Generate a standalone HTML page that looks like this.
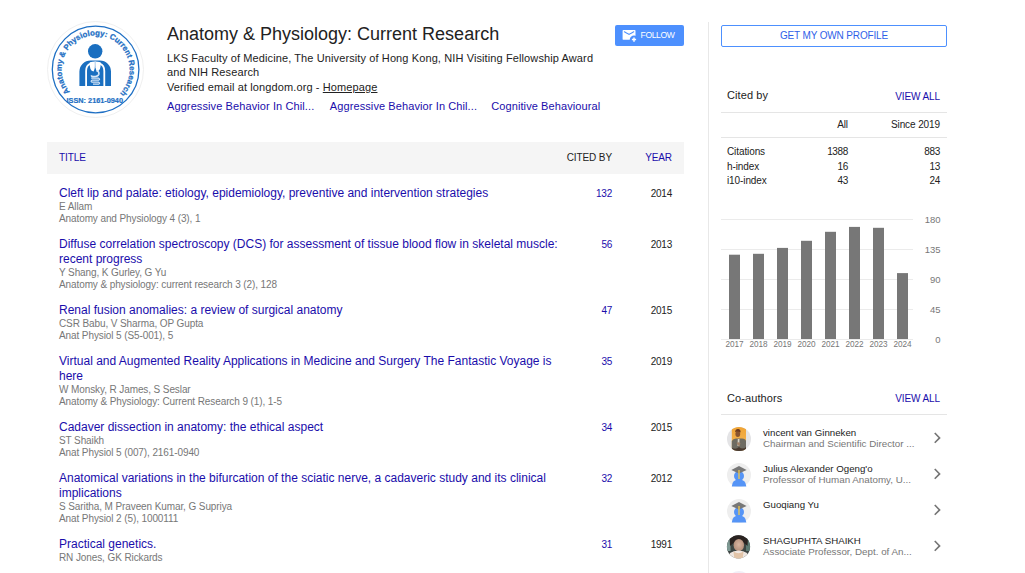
<!DOCTYPE html>
<html><head><meta charset="utf-8">
<style>
*{margin:0;padding:0;box-sizing:border-box}
html,body{width:1025px;height:573px;overflow:hidden;background:#fff}
body{font-family:"Liberation Sans",sans-serif;color:#222;position:relative}
.a{position:absolute;white-space:nowrap}
.lnk{color:#1a0dab}
.g{color:#777}
#hdrname{left:167px;top:24px;font-size:18px;line-height:20px;color:#222}
#ver{left:167px;top:79.5px;font-size:11px;line-height:14px;color:#222;letter-spacing:0.11px}
#aff{left:167px;top:50.5px;font-size:11px;line-height:14px;color:#222;letter-spacing:0.11px}
#aff u{text-decoration:underline}
.int{top:98.5px;font-size:11px;line-height:14px;letter-spacing:0.1px}
#follow{left:615px;top:25px;width:69px;height:21px;background:#4d90fe;border-radius:2px}
#follow span{position:absolute;left:25.6px;top:5px;font-size:8.6px;line-height:10px;color:#fff;letter-spacing:-0.4px}
#thead{left:47px;top:142px;width:637px;height:32px;background:#f5f5f5}
.th{font-size:10px;line-height:12px;top:152px;letter-spacing:-0.1px}
.row{position:absolute;left:59px;width:502px}
.t{font-size:12px;line-height:15px;color:#1a0dab;white-space:normal}
.s{font-size:10px;line-height:12px;color:#777;letter-spacing:-0.1px;white-space:nowrap}
.num{letter-spacing:-0.25px;font-size:10px;line-height:12px;text-align:right}
#vline{left:708px;top:22px;width:1px;height:560px;background:#e8e8e8}
#gmop{left:721px;top:25px;width:226px;height:22px;border:1px solid #4d90fe;border-radius:2px;text-align:center;font-size:10px;line-height:20px;color:#2f5fe8;letter-spacing:-0.15px}
.hr{position:absolute;left:721px;width:226px;height:1px;background:#e5e5e5}
.c10{font-size:10px;line-height:12px;letter-spacing:-0.1px}
.nm{letter-spacing:-0.35px}
</style></head><body>

<!-- logo -->
<svg class="a" style="left:45px;top:20px" width="100" height="100" viewBox="45 20 100 100">
  <circle cx="95.5" cy="69.5" r="48" fill="#fff" stroke="#f0f0f0" stroke-width="1"/>
  <circle cx="95.6" cy="69.5" r="43.3" fill="none" stroke="#1e6fc4" stroke-width="1.3"/>
  <defs><path id="arc" d="M69.94,91.81 A34,34 0 1 1 121.26,91.81"/></defs>
  <text font-family="Liberation Sans" font-weight="bold" font-size="7.9" fill="#1e6fc4" stroke="#1e6fc4" stroke-width="0.25"><textPath href="#arc" startOffset="0">Anatomy &amp; Physiology: Current Research</textPath></text>
  <text x="94.8" y="103" text-anchor="middle" font-family="Liberation Sans" font-weight="bold" font-size="7.3" fill="#1e6fc4" stroke="#1e6fc4" stroke-width="0.2">ISSN: 2161-0940</text>
  <circle cx="95.2" cy="51.3" r="7.2" fill="#1a6fc0"/>
  <path d="M79.4,86 V71.6 A11.2,11.2 0 0 1 90.6,60.4 H99.8 A11.2,11.2 0 0 1 111,71.6 V86 Z" fill="#1a6fc0"/>
  <path d="M86.1,86 V71 Q86.1,65.2 90.5,63.6 M104.3,86 V71 Q104.3,65.2 99.9,63.6" fill="none" stroke="#fff" stroke-width="1.8"/>
  <path d="M89.8,62.2 Q89.2,71 93.6,71.4 Q94.9,69 95.2,65 Q95.5,69 96.8,71.4 Q101.2,71 100.6,62.2 Q95.2,60.8 89.8,62.2 Z" fill="#fff"/>
  <path d="M95.2,61.5 V68" stroke="#b9d3ee" stroke-width="1.2"/>
  <path d="M96.6,70.8 Q99.3,71.2 98.8,74.2 Q98.2,76.6 93.6,76.6 Q91.2,76.6 91.6,75.2" fill="none" stroke="#d6e6f6" stroke-width="1.7"/>
  <path d="M91.2,78.2 H98.6 Q100.6,79.2 98.6,80.2 H92 Q90.2,81.2 92,82.2 H98.6 Q100.6,83.2 98.6,84.2 H93" fill="none" stroke="#d6e6f6" stroke-width="1.2"/>
</svg>

<div id="hdrname" class="a">Anatomy &amp; Physiology: Current Research</div>
<div id="aff" class="a">LKS Faculty of Medicine, The University of Hong Kong, NIH Visiting Fellowship Award<br>and NIH Research</div>
<div id="ver" class="a">Verified email at longdom.org - <u>Homepage</u></div>
<div class="a int lnk" style="left:167px">Aggressive Behavior In Chil...</div>
<div class="a int lnk" style="left:329.8px">Aggressive Behavior In Chil...</div>
<div class="a int lnk" style="left:491.2px">Cognitive Behavioural</div>

<div id="follow" class="a">
  <svg style="position:absolute;left:0;top:0" width="69" height="21" viewBox="615 25 69 21">
    <rect x="622.6" y="29.9" width="12.9" height="9.9" rx="0.9" fill="#fff"/>
    <path d="M624.4,31.8 Q629,34.5 629.05,34.5 Q629.1,34.5 633.7,31.8" fill="none" stroke="#4d90fe" stroke-width="1.1" stroke-linecap="round"/>
    <circle cx="634" cy="39.6" r="4.2" fill="#4d90fe"/>
    <path d="M631.9,39.6 H636.1 M634,37.4 V41.8" stroke="#fff" stroke-width="1.5"/>
  </svg>
  <span>FOLLOW</span>
</div>

<!-- table header -->
<div id="thead" class="a"></div>
<div class="a th lnk" style="left:59px">TITLE</div>
<div class="a th" style="left:540px;width:72px;text-align:right">CITED BY</div>
<div class="a th lnk" style="left:620px;width:52px;text-align:right">YEAR</div>

<!-- rows -->
<div class="row" style="top:186px"><div class="t">Cleft lip and palate: etiology, epidemiology, preventive and intervention strategies</div><div class="s">E Allam</div><div class="s">Anatomy and Physiology 4 (3), 1</div></div>
<div class="row" style="top:237px"><div class="t">Diffuse correlation spectroscopy (DCS) for assessment of tissue blood flow in skeletal muscle: recent progress</div><div class="s">Y Shang, K Gurley, G Yu</div><div class="s">Anatomy &amp; physiology: current research 3 (2), 128</div></div>
<div class="row" style="top:303px"><div class="t">Renal fusion anomalies: a review of surgical anatomy</div><div class="s">CSR Babu, V Sharma, OP Gupta</div><div class="s">Anat Physiol 5 (S5-001), 5</div></div>
<div class="row" style="top:354px"><div class="t">Virtual and Augmented Reality Applications in Medicine and Surgery The Fantastic Voyage is here</div><div class="s">W Monsky, R James, S Seslar</div><div class="s">Anatomy &amp; Physiology: Current Research 9 (1), 1-5</div></div>
<div class="row" style="top:420px"><div class="t">Cadaver dissection in anatomy: the ethical aspect</div><div class="s">ST Shaikh</div><div class="s">Anat Physiol 5 (007), 2161-0940</div></div>
<div class="row" style="top:471px"><div class="t">Anatomical variations in the bifurcation of the sciatic nerve, a cadaveric study and its clinical implications</div><div class="s">S Saritha, M Praveen Kumar, G Supriya</div><div class="s">Anat Physiol 2 (5), 1000111</div></div>
<div class="row" style="top:537px"><div class="t">Practical genetics.</div><div class="s">RN Jones, GK Rickards</div></div>

<!-- numbers -->
<div class="a num lnk" style="left:570px;width:42px;top:187.5px">132</div>
<div class="a num" style="left:630px;width:42px;top:187.5px">2014</div>
<div class="a num lnk" style="left:570px;width:42px;top:238.5px">56</div>
<div class="a num" style="left:630px;width:42px;top:238.5px">2013</div>
<div class="a num lnk" style="left:570px;width:42px;top:304.5px">47</div>
<div class="a num" style="left:630px;width:42px;top:304.5px">2015</div>
<div class="a num lnk" style="left:570px;width:42px;top:355.5px">35</div>
<div class="a num" style="left:630px;width:42px;top:355.5px">2019</div>
<div class="a num lnk" style="left:570px;width:42px;top:421.5px">34</div>
<div class="a num" style="left:630px;width:42px;top:421.5px">2015</div>
<div class="a num lnk" style="left:570px;width:42px;top:472.5px">32</div>
<div class="a num" style="left:630px;width:42px;top:472.5px">2012</div>
<div class="a num lnk" style="left:570px;width:42px;top:538.5px">31</div>
<div class="a num" style="left:630px;width:42px;top:538.5px">1991</div>

<!-- right column -->
<div id="vline" class="a"></div>
<div id="gmop" class="a">GET MY OWN PROFILE</div>

<div class="a" style="left:727px;top:88px;font-size:11px;line-height:14px;letter-spacing:0.1px">Cited by</div>
<div class="a lnk" style="left:880px;width:60px;text-align:right;top:90.5px;font-size:10px;line-height:12px;letter-spacing:-0.1px">VIEW ALL</div>
<div class="hr" style="top:112px"></div>
<div class="a c10" style="left:800px;width:48px;text-align:right;top:118.7px">All</div>
<div class="a c10" style="left:870px;width:70px;text-align:right;top:118.7px">Since 2019</div>
<div class="hr" style="top:137px"></div>
<div class="a c10" style="left:727px;top:146px">Citations</div>
<div class="a c10 nm" style="left:800px;width:48px;text-align:right;top:146px" >1388</div>
<div class="a c10 nm" style="left:870px;width:70px;text-align:right;top:146px" >883</div>
<div class="a c10" style="left:727px;top:160.5px">h-index</div>
<div class="a c10 nm" style="left:800px;width:48px;text-align:right;top:160.5px">16</div>
<div class="a c10 nm" style="left:870px;width:70px;text-align:right;top:160.5px">13</div>
<div class="a c10" style="left:727px;top:175.4px">i10-index</div>
<div class="a c10 nm" style="left:800px;width:48px;text-align:right;top:175.4px">43</div>
<div class="a c10 nm" style="left:870px;width:70px;text-align:right;top:175.4px">24</div>

<!-- chart -->
<svg class="a" style="left:715px;top:205px" width="240" height="150" viewBox="715 205 240 150">
  <g stroke="#ebebeb" stroke-width="1">
    <line x1="721" x2="913" y1="219.5" y2="219.5"/>
    <line x1="721" x2="913" y1="249.5" y2="249.5"/>
    <line x1="721" x2="913" y1="279.5" y2="279.5"/>
    <line x1="721" x2="913" y1="309.5" y2="309.5"/>
    <line x1="721" x2="913" y1="339.5" y2="339.5"/>
  </g>
  <g fill="#777">
    <rect x="729" y="254.7" width="11" height="84.3"/>
    <rect x="753" y="253.8" width="11" height="85.2"/>
    <rect x="777" y="247.9" width="11" height="91.1"/>
    <rect x="801" y="240.8" width="11" height="98.2"/>
    <rect x="825" y="231.8" width="11" height="107.2"/>
    <rect x="849" y="226.9" width="11" height="112.1"/>
    <rect x="873" y="227.8" width="11" height="111.2"/>
    <rect x="897" y="273.1" width="11" height="65.9"/>
  </g>
  <g fill="#777" font-family="Liberation Sans" font-size="8.2" text-anchor="middle">
    <text x="734.5" y="346.5">2017</text>
    <text x="758.5" y="346.5">2018</text>
    <text x="782.5" y="346.5">2019</text>
    <text x="806.5" y="346.5">2020</text>
    <text x="830.5" y="346.5">2021</text>
    <text x="854.5" y="346.5">2022</text>
    <text x="878.5" y="346.5">2023</text>
    <text x="902.5" y="346.5">2024</text>
  </g>
  <g fill="#777" font-family="Liberation Sans" font-size="9.5" text-anchor="end">
    <text x="940.5" y="223">180</text>
    <text x="940.5" y="253">135</text>
    <text x="940.5" y="283">90</text>
    <text x="940.5" y="313">45</text>
    <text x="940.5" y="343">0</text>
  </g>
</svg>

<!-- co-authors -->
<div class="a" style="left:727px;top:390.6px;font-size:11px;line-height:14px;letter-spacing:0.1px">Co-authors</div>
<div class="a lnk" style="left:880px;width:60px;text-align:right;top:393px;font-size:10px;line-height:12px;letter-spacing:-0.1px">VIEW ALL</div>
<div class="hr" style="top:414px"></div>

<svg class="a" style="left:715px;top:420px" width="240" height="153" viewBox="715 420 240 153">
  <defs>
    <clipPath id="cc1"><circle cx="739" cy="439" r="12"/></clipPath>
    <clipPath id="cc4"><circle cx="738.5" cy="546.8" r="11.6"/></clipPath>
    <g id="schol">
      <circle cx="739" cy="0" r="12" fill="#eee"/>
      <circle cx="739" cy="1" r="5" fill="#5594f6"/>
      <path d="M731.8,11.5 Q732,4.5 739,4.5 Q746,4.5 746.3,11.5 Z" fill="#5594f6"/>
      <path d="M731.3,-5 L739,-9 L746.6,-5 L739,-1.5 Z" fill="#777"/>
      <path d="M739,-5 V4" stroke="#f1c84a" stroke-width="1.3"/>
    </g>
  </defs>
  <!-- avatar 1 photo -->
  <circle cx="739" cy="439" r="12" fill="#e4e4e6"/>
  <defs><linearGradient id="og" x1="0" y1="0" x2="0" y2="1"><stop offset="0" stop-color="#f0a435"/><stop offset="1" stop-color="#f3b85c"/></linearGradient></defs>
  <g clip-path="url(#cc1)">
    <rect x="731.8" y="427" width="14.2" height="24" fill="url(#og)"/>
    <path d="M731.8,451 V441 Q733,438.5 736,438.5 H742 Q745.5,438.8 746,441 V451 Z" fill="#6e6b62"/>
    <path d="M737.8,439 L739.5,439 L739.2,446 L737.5,446 Z" fill="#d8d4c8"/>
    <path d="M736.5,443 Q738.5,441.5 740.5,443.5 L739,446.5 Z" fill="#a08068"/>
    <ellipse cx="737.8" cy="434" rx="2.4" ry="3" fill="#8a5530"/>
    <path d="M735,432 Q735.5,428.6 738.5,429 Q741,429.6 740.5,432.5 Q738,431 735,432 Z" fill="#6a3a20"/>
    <path d="M732,448 Q736,450 739,447 Q743,450 746,447 V451 H732 Z" fill="#4a3a30"/>
  </g>
  <use href="#schol" y="475"/>
  <use href="#schol" y="511"/>
  <!-- avatar 4 -->
  <defs><radialGradient id="fg" cx="0.5" cy="0.45" r="0.6"><stop offset="0" stop-color="#d8b4a0"/><stop offset="1" stop-color="#b08a76"/></radialGradient></defs>
  <circle cx="738.5" cy="546.8" r="11.6" fill="#3e4644"/>
  <g clip-path="url(#cc4)">
    <rect x="726" y="537" width="4.5" height="14" fill="#7f9a94"/>
    <rect x="746" y="538" width="6" height="13" fill="#5d7a72"/>
    <path d="M729.5,537 Q739,530 748,538 L747.5,546 Q739,537 730,546 Z" fill="#2a2220"/>
    <ellipse cx="738.8" cy="545.2" rx="5.2" ry="6.2" fill="url(#fg)"/>
    <path d="M726,560 Q728,551 738.5,550.5 Q749,551 751,560 Z" fill="#efe6e0"/>
    <path d="M733.5,551.5 Q738.5,555 743.5,551.5 L742.5,560 H734.5 Z" fill="#e2c4a8"/>
  </g>
  <circle cx="739" cy="583" r="12" fill="#f1eef6"/>
  <g fill="none" stroke="#757575" stroke-width="1.6" stroke-linecap="square">
    <path d="M935.3,433.6 L939.6,437.9 L935.3,442.2"/>
    <path d="M935.3,469.6 L939.6,473.9 L935.3,478.2"/>
    <path d="M935.3,505.6 L939.6,509.9 L935.3,514.2"/>
    <path d="M935.3,541.6 L939.6,545.9 L935.3,550.2"/>
  </g>
</svg>

<div class="a" style="left:763px;top:426.5px;font-size:9.7px;line-height:12px">vincent van Ginneken</div>
<div class="a g" style="left:763px;top:437.5px;font-size:9.8px;line-height:12px">Chairman and Scientific Director ...</div>
<div class="a" style="left:763px;top:462.5px;font-size:9.7px;line-height:12px">Julius Alexander Ogeng'o</div>
<div class="a g" style="left:763px;top:473.5px;font-size:9.8px;line-height:12px">Professor of Human Anatomy, U...</div>
<div class="a" style="left:763px;top:498.5px;font-size:9.7px;line-height:12px">Guoqiang Yu</div>
<div class="a" style="left:763px;top:534.5px;font-size:9.7px;line-height:12px">SHAGUPHTA SHAIKH</div>
<div class="a g" style="left:763px;top:545.5px;font-size:9.8px;line-height:12px">Associate Professor, Dept. of An...</div>

</body></html>
